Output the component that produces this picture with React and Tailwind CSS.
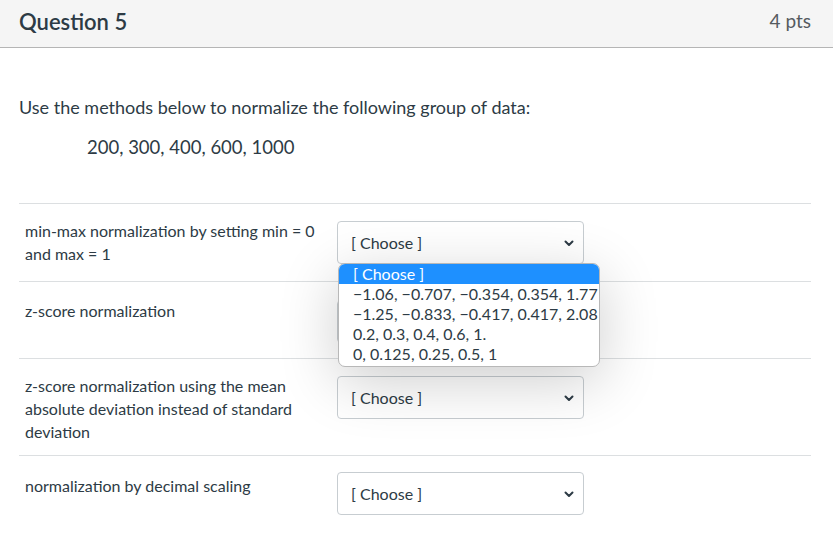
import React from "react";

function Chevron() {
  return (
    <svg width="12" height="12" viewBox="0 0 12 12" className="absolute right-[8px] top-[15px]">
      <path d="M2.5 4.5 L6 8 L9.5 4.5" fill="none" stroke="#2d3b45" strokeWidth="2" strokeLinecap="round" strokeLinejoin="round" />
    </svg>
  );
}

function Select({ className = "" }) {
  return (
    <div className={"relative w-[247px] h-[43px] border border-[#c7cdd1] rounded-[4px] bg-white flex items-center pl-[13px] text-[16px] text-[#2d3b45] " + className}>
      [ Choose ]
      <Chevron />
    </div>
  );
}

export default function App() {
  const options = [
    "−1.06, −0.707, −0.354, 0.354, 1.77",
    "−1.25, −0.833, −0.417, 0.417, 2.08",
    "0.2, 0.3, 0.4, 0.6, 1.",
    "0, 0.125, 0.25, 0.5, 1",
  ];
  return (
    <div className="relative w-[833px] h-[553px] bg-white overflow-hidden text-[#2d3b45]" style={{ fontFamily: "Lato, 'Noto Sans', sans-serif" }}>
      <div className="h-[48px] bg-[#f5f5f5] border-b border-[#b5b5b5] flex items-center justify-between pl-[19px] pr-[22px]">
        <div className="text-[22px] font-semibold text-[#2d3b45] -mt-[5px]">Question 5</div>
        <div className="text-[19px] text-[#555b60] -mt-[5px]">4 pts</div>
      </div>
      <div className="px-[19px]">
        <div className="pt-[47px] text-[18px] leading-[24px]">Use the methods below to normalize the following group of data:</div>
        <div className="pt-[16px] pl-[68px] text-[18.5px] leading-[24px]">200, 300, 400, 600, 1000</div>
        <div className="mt-[44px] w-[792px]">
          <div className="h-[78px] border-t border-[#dcdfe1] flex pt-[15px]">
            <div className="w-[312px] pl-[6px] text-[16px] leading-[23px]">min-max normalization by setting min = 0 and max = 1</div>
            <Select className="ml-[6px] mt-[2px]" />
          </div>
          <div className="h-[77px] border-t border-[#dcdfe1] flex pt-[17px]">
            <div className="w-[312px] pl-[6px] text-[16px] leading-[23px]">z-score normalization</div>
            <Select className="ml-[6px] mt-[1px]" />
          </div>
          <div className="h-[97px] border-t border-[#dcdfe1] flex pt-[15px]">
            <div className="w-[312px] pl-[6px] text-[16px] leading-[23px]">z-score normalization using the mean absolute deviation instead of standard deviation</div>
            <Select className="ml-[6px] mt-[2px]" />
          </div>
          <div className="border-t border-[#dcdfe1] flex pt-[18px]">
            <div className="w-[312px] pl-[6px] text-[16px] leading-[23px]">normalization by decimal scaling</div>
            <Select className="ml-[6px] -mt-[2px]" />
          </div>
        </div>
      </div>
      <div className="absolute left-[338px] top-[263px] w-[262px] bg-white rounded-[7px] border border-[#b8b8b8] shadow-[0_14px_60px_rgba(0,0,0,0.2)] overflow-hidden text-[16px] leading-[20px] text-[#2d3b45]">
        <div className="bg-[#1e90ff] text-white pl-[14px]">[ Choose ]</div>
        {options.map((o) => (
          <div key={o} className="pl-[14px] whitespace-nowrap">{o}</div>
        ))}
        <div className="h-[2px]" />
      </div>
    </div>
  );
}
